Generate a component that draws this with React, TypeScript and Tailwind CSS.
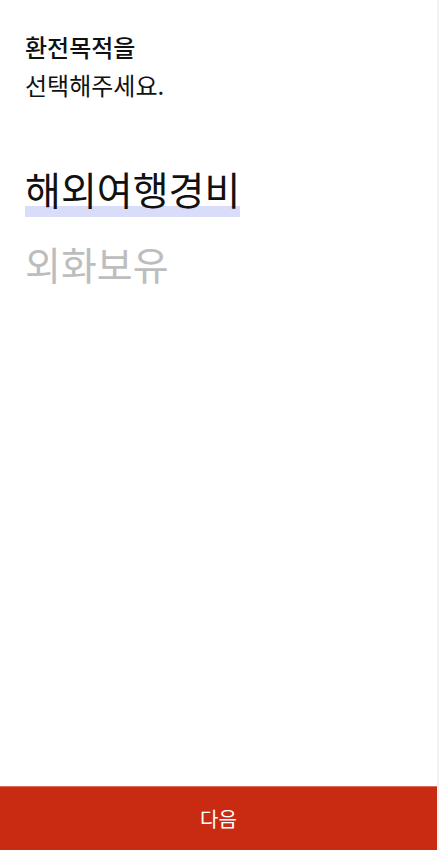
import React, { useState } from "react";

const purposes = ["해외여행경비", "외화보유"];

const App = () => {
  const [selected, setSelected] = useState(0);
  return (
    <div
      className="relative flex h-[850px] w-full flex-col bg-white border-r-2 border-[#f2f2f2]"
      style={{ fontFamily: '"Noto Sans CJK KR", "Noto Sans", sans-serif' }}
    >
      <div className="flex-1 px-[25px] pt-[28px]">
        <h1 className="text-[24px] leading-[38px] text-[#111] font-normal">
          <span className="font-medium">환전목적을</span>
          <br />
          선택해주세요.
        </h1>
        <ul className="mt-[58px] flex flex-col gap-[23px]">
          {purposes.map((p, i) => (
            <li key={p}>
              <button
                onClick={() => setSelected(i)}
                className={
                  "relative text-[39px] leading-[52px] " +
                  (selected === i ? "text-[#111]" : "text-[#bdbdbd]")
                }
              >
                {selected === i && (
                  <span className="absolute bottom-[-3px] left-0 right-0 h-[11px] bg-[#d9ddfa]"></span>
                )}
                <span className="relative">{p}</span>
              </button>
            </li>
          ))}
        </ul>
      </div>
      <button className="h-[64px] w-full border-t border-[#e06a55] bg-[#c92a12] text-[20px] text-white">
        다음
      </button>
    </div>
  );
};

export default App;
